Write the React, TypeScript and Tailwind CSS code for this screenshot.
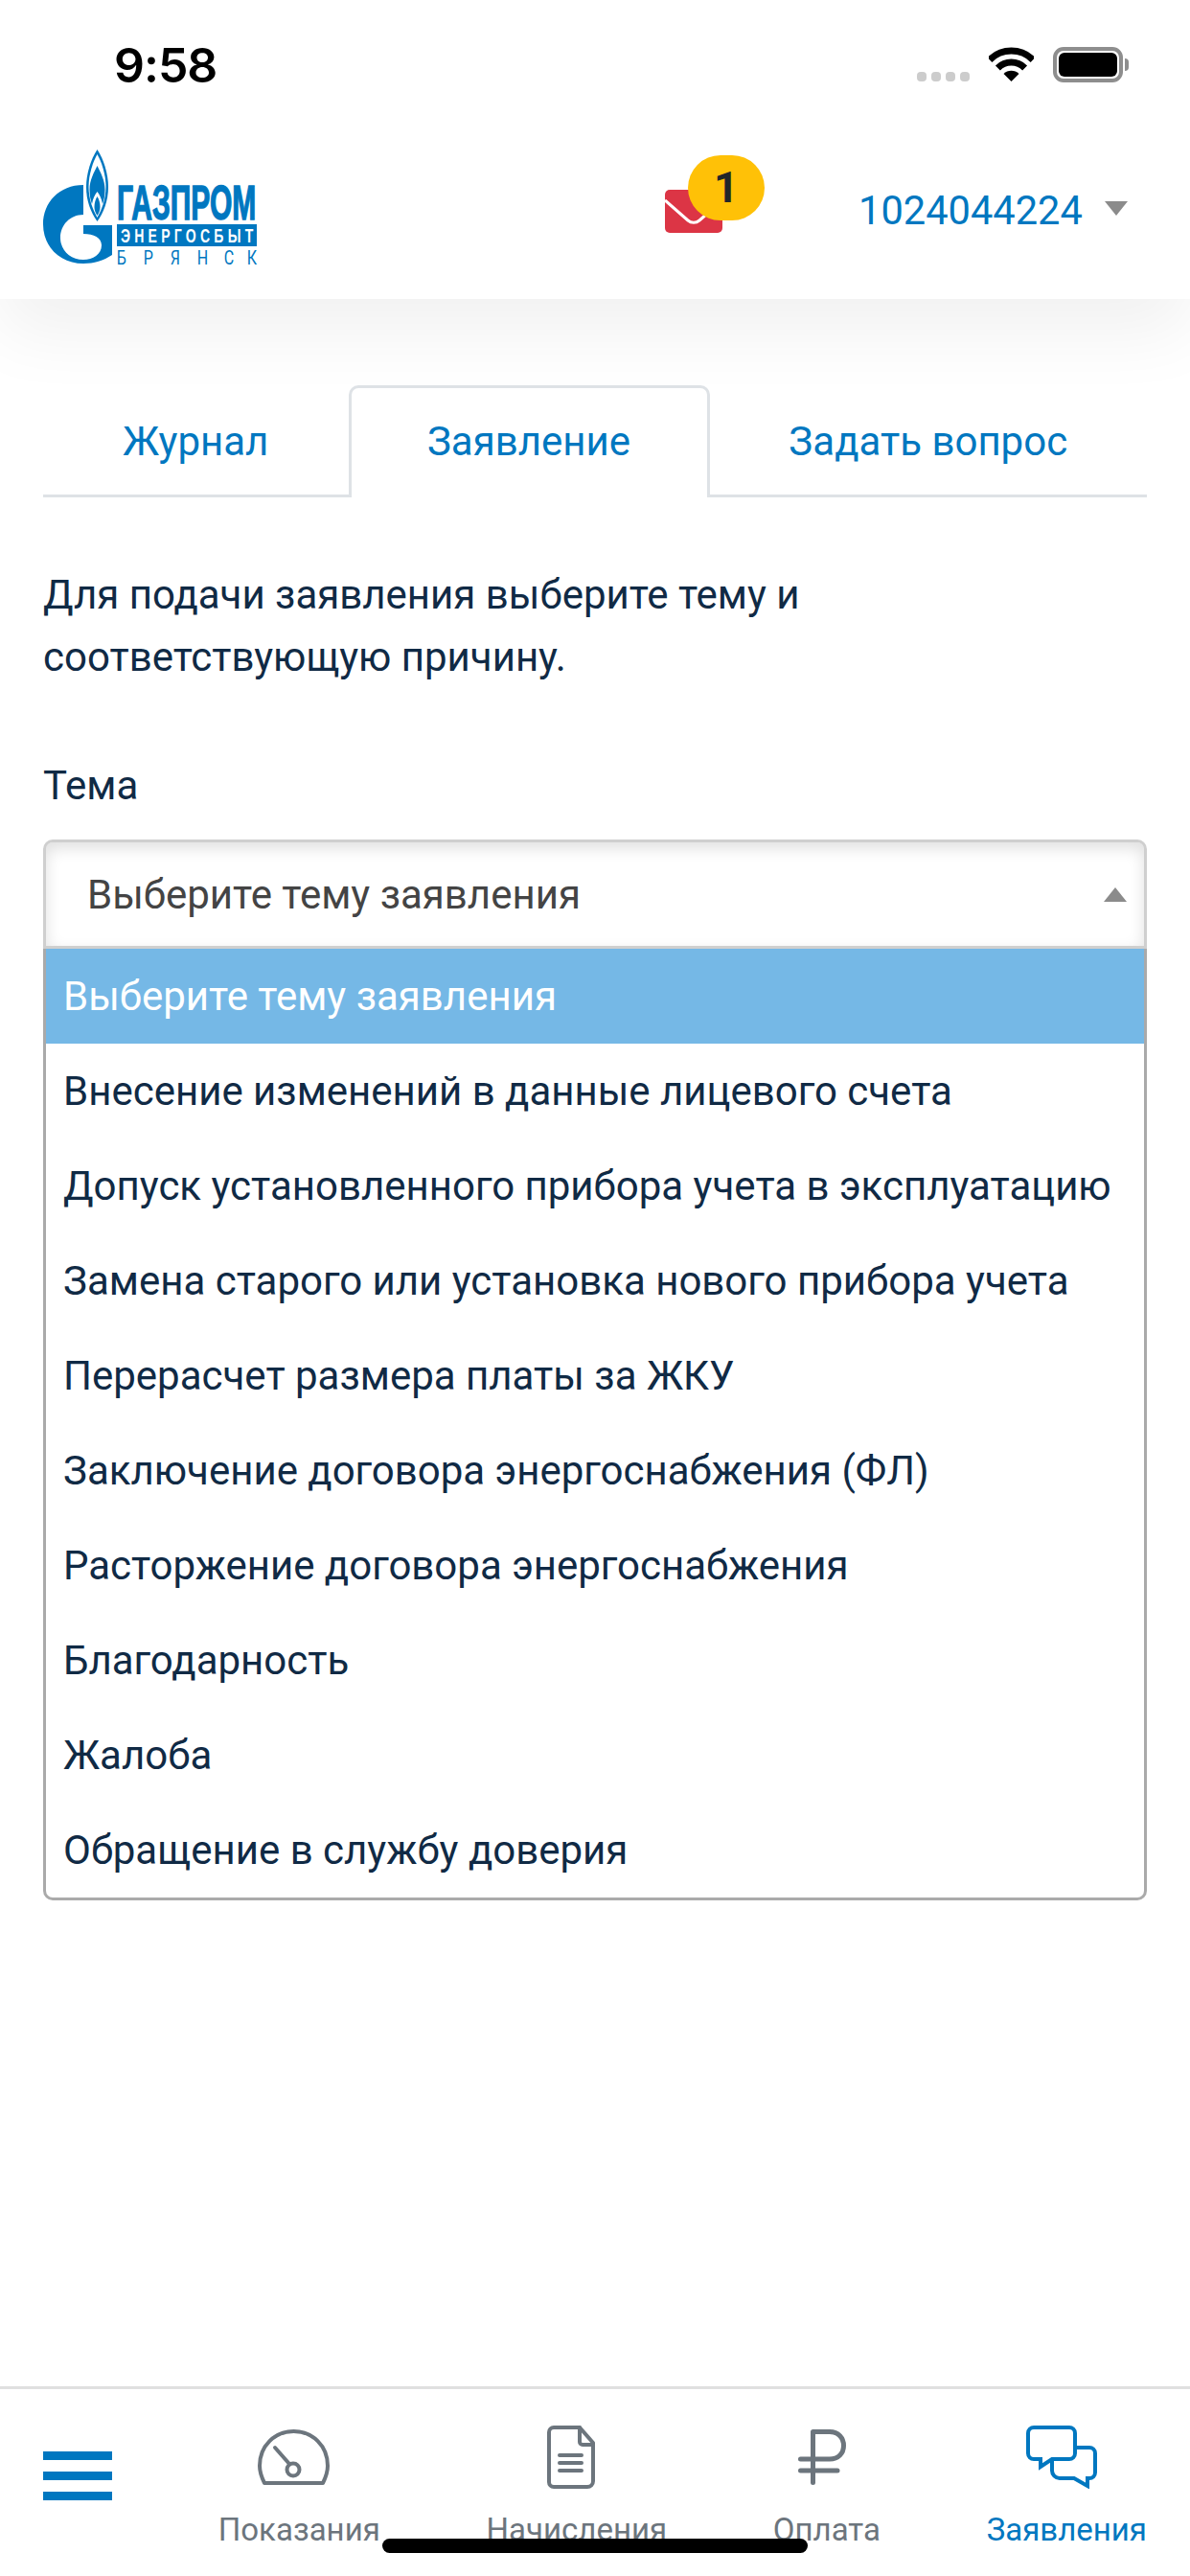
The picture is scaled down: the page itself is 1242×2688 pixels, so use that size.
import { ReactNode } from 'react';

const TOPICS = [
  'Выберите тему заявления',
  'Внесение изменений в данные лицевого счета',
  'Допуск установленного прибора учета в эксплуатацию',
  'Замена старого или установка нового прибора учета',
  'Перерасчет размера платы за ЖКУ',
  'Заключение договора энергоснабжения (ФЛ)',
  'Расторжение договора энергоснабжения',
  'Благодарность',
  'Жалоба',
  'Обращение в службу доверия',
];

function StatusBar() {
  return (
    <div className="flex h-[136px] items-start pl-[119px] pt-[40px]">
      <span className="w-[838px] font-['Inter',sans-serif] text-[50px] leading-[56px] font-semibold tracking-[-1px] text-black">9:58</span>
      <div className="mt-[35px] flex gap-[5px]">
        <span className="h-[10px] w-[10px] rounded-[4px] bg-[#cccccc]" />
        <span className="h-[10px] w-[10px] rounded-[4px] bg-[#cccccc]" />
        <span className="h-[10px] w-[10px] rounded-[4px] bg-[#cccccc]" />
        <span className="h-[10px] w-[10px] rounded-[4px] bg-[#cccccc]" />
      </div>
      <svg className="mt-[9px] ml-[20px]" width="47" height="36" viewBox="0 0 47 36">
        <path d="M0.9 13.4A32 32 0 0 1 46.1 13.4" fill="none" stroke="#000" strokeWidth="7" />
        <path d="M9.4 21.9A20 20 0 0 1 37.6 21.9" fill="none" stroke="#000" strokeWidth="7" />
        <path d="M23.5 36L15.5 28A11.3 11.3 0 0 1 31.5 28Z" fill="#000" />
      </svg>
      <div className="mt-[9px] ml-[20px] flex items-center">
        <div className="h-[37px] w-[73px] rounded-[11px] border-[4px] border-[#8e8e8e] p-[2px]">
          <div className="h-full w-full rounded-[6px] bg-black" />
        </div>
        <div className="ml-[2px] h-[13px] w-[4px] rounded-r-[4px] bg-[#8e8e8e]" />
      </div>
    </div>
  );
}

function Logo() {
  return (
    <svg width="225" height="124" viewBox="0 0 225 124" className="shrink-0">
      <path
        d="M42 37C17 37 0 55 0 78C0 102 18 119 42 119C53 119 63 116 72 110L72 79L42 79L42 88C53 88 61 92 61 100C61 109 52 115 42 115C28 115 18 105 18 92C18 79 28 68 42 68Z"
        fill="#0077c0"
      />
      <path d="M56.5 0C50 10 45 25 45 39C45 54 50 66 56.5 75C63 66 68 54 68 39C68 25 63 10 56.5 0Z" fill="#0077c0" />
      <path d="M56.5 5C52 13 47.5 26 47.5 39C47.5 52 52 63 56.5 71C61 63 65.5 52 65.5 39C65.5 26 61 13 56.5 5Z" fill="#fff" />
      <path d="M56.5 17C53 24 48.5 32 48.5 42C48.5 48 49.5 53 51 57C52 51 54 47 56.5 44C59 47 61 51 62 57C63.5 53 64.5 48 64.5 42C64.5 32 60 24 56.5 17Z" fill="#0077c0" />
      <path d="M56.5 49C54.5 52 53.5 56 53.5 60C53.5 63 54.5 66 56.5 69C58.5 66 59.5 63 59.5 60C59.5 56 58.5 52 56.5 49Z" fill="#0077c0" />
      <text
        transform="scale(0.6 1)"
        x="128.5"
        y="73"
        fontFamily="'Liberation Sans', sans-serif"
        fontWeight="700"
        fontSize="50"
        textLength="242"
        lengthAdjust="spacingAndGlyphs"
        fill="#0077c0"
        stroke="#0077c0"
        strokeWidth="1.4"
      >
        ГАЗПРОМ
      </text>
      <rect x="77" y="78" width="146" height="23" fill="#0077c0" />
      <text
        transform="scale(0.72 1)"
        x="112.5"
        y="97"
        fontFamily="'Liberation Sans', sans-serif"
        fontWeight="700"
        fontSize="19.5"
        textLength="192"
        lengthAdjust="spacing"
        fill="#fff"
      >
        ЭНЕРГОСБЫТ
      </text>
      <text
        transform="scale(0.8 1)"
        x="96 131 166 201 236 266"
        y="120"
        fontFamily="'Roboto', sans-serif"
        fontWeight="400"
        fontSize="20"
        fill="#0077c0"
      >
        БРЯНСК
      </text>
    </svg>
  );
}

function HeaderRow() {
  return (
    <div className="flex items-start pt-[20px] pl-[45px]">
      <Logo />
      <div className="relative mt-[42px] ml-[424px] h-[45px] w-[60px] overflow-visible">
        <svg width="60" height="45" viewBox="0 0 60 45" className="block">
          <rect width="60" height="45" rx="5" fill="#dc3545" />
          <path d="M0 11L24 32C27.5 35 32.5 35 36 32L60 11" fill="none" stroke="#fff" strokeWidth="3" />
        </svg>
        <span className="absolute top-[-36px] left-[24px] flex h-[68px] w-[80px] items-center justify-center rounded-[34px] bg-[#ffc107] pb-[2px] text-[45px] leading-none font-bold text-[#212529]">
          1
        </span>
      </div>
      <span className="mt-[41px] ml-[142px] text-[41.6px] leading-[46px] text-[#0077c0]">1024044224</span>
      <svg className="mt-[54px] ml-[23px]" width="24" height="15" viewBox="0 0 24 15">
        <path d="M0 0H24L12 15Z" fill="#8b8b8b" />
      </svg>
    </div>
  );
}

function Tabs() {
  return (
    <div className="flex h-[117px] border-b-[3px] border-[#dee2e6] text-[42px] leading-[46px] text-[#0077c0]">
      <div className="flex w-[318.5px] items-center justify-center pt-[4px]">Журнал</div>
      <div className="mb-[-3px] flex w-[377px] items-center justify-center rounded-t-[10px] border-[3px] border-b-0 border-[#dee2e6] bg-white pb-[2px]">Заявление</div>
      <div className="flex flex-1 items-center justify-center pt-[4px]">Задать вопрос</div>
    </div>
  );
}

function TopicSelect() {
  return (
    <div>
      <div className="flex h-[114px] items-center justify-between rounded-t-[10px] border-[3px] border-[#cfcfcf] pr-[18px] pl-[43px] text-[42px] text-[#444444] shadow-[inset_0_6px_16px_rgba(0,0,0,0.13)]">
        <span>Выберите тему заявления</span>
        <svg width="24" height="15" viewBox="0 0 24 15">
          <path d="M12 0L24 15H0Z" fill="#8b8b8b" />
        </svg>
      </div>
      <div className="rounded-b-[10px] border-[3px] border-t-0 border-[#aaaaaa] text-[42px] text-[#102a45]">
        {TOPICS.map((t, i) => (
          <div key={t} className={i === 0 ? 'flex h-[99px] items-center bg-[#75b8e6] pb-[1px] pl-[18px] text-white' : 'flex h-[99px] items-center pb-[1px] pl-[18px]'}>
            {t}
          </div>
        ))}
      </div>
    </div>
  );
}

function NavItem({ icon, label, active, shift }: { icon: ReactNode; label: string; active?: boolean; shift: string }) {
  return (
    <div className={active ? 'flex flex-col items-center text-[#0077c0]' : 'flex flex-col items-center text-[#6c757d]'}>
      <div className={`flex h-[66px] items-center ${shift}`}>{icon}</div>
      <span className="mt-[23px] text-[33px] leading-[40px]">{label}</span>
    </div>
  );
}

const GaugeIcon = (
  <svg width="75" height="58" viewBox="0 0 75 58" fill="none" stroke="#6c757d" strokeWidth="4" strokeLinecap="round" strokeLinejoin="round">
    <path d="M7 56H68C71 50 73 44 73 38C73 17 57 2 37.5 2C18 2 2 17 2 38C2 44 4 50 7 56Z" />
    <path d="M18 19L33 36" />
    <circle cx="37" cy="42" r="6.5" />
  </svg>
);

const DocIcon = (
  <svg width="50" height="66" viewBox="0 0 50 66" fill="none" stroke="#6c757d" strokeWidth="4" strokeLinecap="round" strokeLinejoin="round">
    <path d="M7 2H34L48 18V58A6 6 0 0 1 42 64H7A5 5 0 0 1 2 59V7A5 5 0 0 1 7 2Z" />
    <path d="M34 2V17A3 3 0 0 0 37 20H48" />
    <path d="M13 31H36M13 39H36M13 47H36" />
  </svg>
);

const RubleIcon = (
  <svg width="50" height="58" viewBox="0 0 50 58" fill="none" stroke="#6c757d" strokeWidth="5" strokeLinecap="round" strokeLinejoin="round">
    <path d="M15.5 55.5V2.5H33C42 2.5 47.5 9 47.5 17C47.5 25 42 31 33 31H2.5" />
    <path d="M2.5 43H41" />
  </svg>
);

const ChatIcon = (
  <svg width="75" height="66" viewBox="0 0 75 66" fill="none" stroke="#0077c0" strokeWidth="4">
    <path d="M8 2H45A6 6 0 0 1 51 8V29A6 6 0 0 1 45 35H27L15 43V35H8A6 6 0 0 1 2 29V8A6 6 0 0 1 8 2Z" />
    <path d="M52 23H66A6 6 0 0 1 72 29V49A6 6 0 0 1 66 55H64V63L50 55H35A8 8 0 0 1 27 47V36" />
  </svg>
);

function BottomNav() {
  return (
    <nav className="relative flex h-[198px] justify-between border-t-[3px] border-[#e0e0e0] pt-[38px] pr-[45px] pl-[45px]">
      <div className="mt-[27px] flex w-[72px] flex-col gap-[12px]">
        <span className="h-[9px] bg-[#0077c0]" />
        <span className="h-[9px] bg-[#0077c0]" />
        <span className="h-[9px] bg-[#0077c0]" />
      </div>
      <NavItem icon={GaugeIcon} label="Показания" shift="mr-[11px]" />
      <NavItem icon={DocIcon} label="Начисления" shift="mr-[11px]" />
      <NavItem icon={RubleIcon} label="Оплата" shift="mr-[10px]" />
      <NavItem icon={ChatIcon} label="Заявления" shift="mr-[10px]" active />
      <div className="absolute bottom-[24px] left-[399px] h-[15px] w-[444px] rounded-[8px] bg-black" />
    </nav>
  );
}

export default function App() {
  return (
    <div className="flex h-[2688px] w-[1242px] flex-col overflow-hidden bg-white font-['Roboto',sans-serif]">
      <header className="relative z-10 h-[312px] bg-white shadow-[0_35px_70px_rgba(0,0,0,0.06)]">
        <StatusBar />
        <HeaderRow />
      </header>
      <main className="flex-1 px-[45px] pt-[90px]">
        <Tabs />
        <p className="mt-[69px] text-[42px] leading-[65px] text-[#102a45]">
          Для подачи заявления выберите тему и
          <br />
          соответствующую причину.
        </p>
        <p className="mt-[69px] text-[42px] leading-[65px] text-[#102a45]">Тема</p>
        <div className="mt-[24px]">
          <TopicSelect />
        </div>
      </main>
      <BottomNav />
    </div>
  );
}
